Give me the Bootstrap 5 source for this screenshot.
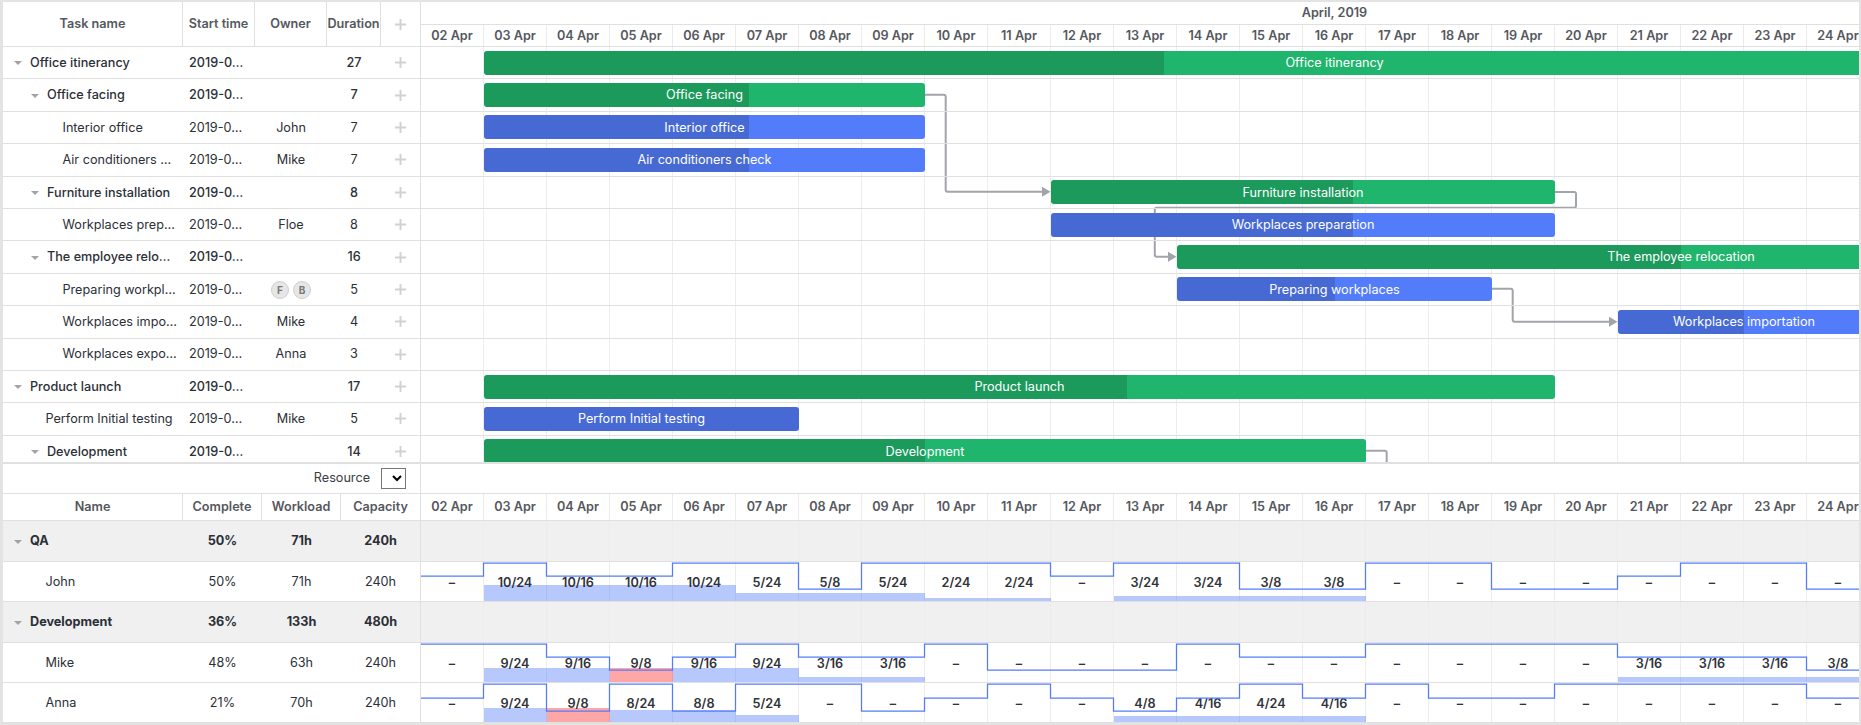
<!DOCTYPE html>
<html lang="en">
<head>
<meta charset="utf-8">
<title>Gantt resource load</title>
<link href="https://cdn.jsdelivr.net/npm/bootstrap@5.3.0/dist/css/bootstrap.min.css" rel="stylesheet">
<style>
html,body{height:100%;overflow:hidden}
body{background:#e3e3e3;padding:2px 2px 2px 3px;font-family:Inter,"Liberation Sans",sans-serif;font-size:12.65px;color:#2b2f36}
.gt-app{width:1856px;height:721px;background:#fff;overflow:hidden}
.gt-top{height:462px;border-bottom:2px solid #e0e0e0;overflow:hidden}
.gt-left{width:418px;flex:none;border-right:1px solid #e0e0e0}
.gt-right{width:1438px;flex:none;overflow:hidden}
.gt-hdr{height:45px;border-bottom:1px solid #e0e0e0;font-weight:600;color:#55585e}
.gt-hdr>div{height:100%;display:flex;align-items:center;justify-content:center;border-right:1px solid #e0e0e0}
.gt-hdr>div:last-child{border-right:0}
.gt-row{height:32.4px;border-bottom:1px solid #e0e0e0}
.gt-w1{width:180px;flex:none;white-space:nowrap;padding-top:1.5px}
.gt-w2{width:72px;flex:none;padding-top:1.5px}
.gt-w3{width:72px;flex:none;padding-top:1.5px}
.gt-w4{width:54px;flex:none;padding-top:1.5px}
.gt-w5{width:39px;flex:none}
.gt-start{padding-left:6px}
.gt-parent .gt-w1{font-weight:500}
.gt-parent .gt-w2{font-weight:500}
.gt-parent .gt-w4{font-weight:500}
.gt-caret{display:block;width:0;height:0;border-left:4px solid transparent;border-right:4px solid transparent;border-top:4px solid #a3a3a3;flex:none;margin-right:8px}
.gt-l0{padding-left:11px}
.gt-l1{padding-left:28px}
.gt-l2{padding-left:59.5px}
.gt-l1b{padding-left:42.5px}
.gt-plus{display:block;width:11px;height:11px}
.gt-plus path{stroke:#d0d1d3;stroke-width:1.9;fill:none}
.gt-ava{width:18px;height:18px;border-radius:50%;background:#e6e6e6;border:1px solid #cfcfcf;color:#777;font-size:10px;font-weight:700;display:flex;align-items:center;justify-content:center}
.gt-month{height:23px;border-bottom:1px solid #e0e0e0;width:1827px;font-weight:600;color:#55585e;padding-top:1.5px}
.gt-scale{height:22px;width:1449px;display:grid;grid-template-columns:repeat(23,63px);border-bottom:1px solid #e0e0e0;font-weight:600;color:#55585e}
.gt-scale>div{display:flex;align-items:center;justify-content:center;border-right:1px solid #ebebeb;white-space:nowrap;padding-top:1.5px}
.gt-body{position:relative;isolation:isolate;height:415px;overflow:hidden;width:1438px;background-image:repeating-linear-gradient(to right,transparent 0,transparent 62px,#ededed 62px,#ededed 63px)}
.gt-links{position:absolute;left:0;top:0;width:1438px;height:415px;z-index:-1;fill:none;stroke:#a1a4a9;stroke-width:2}
.gt-links polygon{fill:#a1a4a9;stroke:none}
.gt-track{display:grid;grid-template-columns:repeat(28,63px);width:1764px;align-items:center}
.gt-bar{position:relative;height:24px;border-radius:3px;overflow:hidden;color:#fff;display:flex;align-items:center;justify-content:center;white-space:nowrap;padding-top:1.5px}
.gt-task{background:#537cfa}
.gt-proj{background:#20b56d}
.gt-prog{position:absolute;left:0;top:0;bottom:0;background:rgba(0,0,0,.15)}
.gt-bar span{position:relative}
.gt-res{height:259px}
.gt-resbar{height:30px;border-bottom:1px solid #e0e0e0}
.gt-rblank{height:30px;border-bottom:1px solid #e0e0e0;background-image:none}
.gt-reslabel{padding-right:11px;color:#3a3d43}
.gt-select{width:25px;height:21px;margin-right:14px;padding:0;background:#fff;border:1px solid #767676;border-radius:0;color:#000}
.gt-rhdr{height:27px;border-bottom:1px solid #e0e0e0;font-weight:600;color:#55585e}
.gt-rhdr>div{height:100%;display:flex;align-items:center;justify-content:center;border-right:1px solid #e0e0e0;padding-top:1.5px}
.gt-rhdr>div:last-child{border-right:0}
.gt-rscale{height:27px}
.gt-n{width:180px;flex:none;padding-top:1.5px}
.gt-m1{width:79px;flex:none;padding-top:1.5px}
.gt-m2{width:79px;flex:none;padding-top:1.5px}
.gt-m3{width:79px;flex:none;padding-top:1.5px}
.gt-rrow{border-bottom:1px solid #e0e0e0;height:40px}
.gt-rtall{height:41px}
.gt-group{background:#f0f0f0;font-weight:700}
.gt-rline{position:relative;width:1449px;display:grid;grid-template-columns:repeat(23,63px);font-weight:600;color:#303338}
.gt-rline.gt-group{background-color:#f0f0f0;background-image:repeating-linear-gradient(to right,transparent 0,transparent 62px,#ececec 62px,#ececec 63px)}
.gt-c{position:relative;display:flex;align-items:center;justify-content:center;border-right:1px solid #ededed;padding-top:4px}
.gt-c span{position:relative}
.gt-fill{position:absolute;left:0;right:-1px;bottom:0;background:rgba(83,124,250,.42)}
.gt-over{background:rgba(255,0,0,.35)}
.gt-cap{position:absolute;left:0;top:0;width:1449px;height:100%;fill:none;stroke:#537cfa;stroke-width:1.25;z-index:2}
</style>
</head>
<body>
<div class="gt-app d-flex flex-column">
  <section class="gt-top d-flex flex-shrink-0">
    <div class="gt-left">
      <div class="gt-hdr d-flex">
        <div class="gt-w1">Task name</div><div class="gt-w2">Start time</div><div class="gt-w3">Owner</div><div class="gt-w4">Duration</div>
        <div class="gt-w5"><svg class="gt-plus" viewBox="0 0 11 11"><path d="M5.5 0V11M0 5.5H11"/></svg></div>
      </div>
      <div class="gt-row gt-parent d-flex align-items-center"><div class="gt-w1 gt-l0 d-flex align-items-center"><i class="gt-caret"></i>Office itinerancy</div><div class="gt-w2 gt-start">2019-0…</div><div class="gt-w3 text-center"></div><div class="gt-w4 text-center">27</div><div class="gt-w5 d-flex justify-content-center"><svg class="gt-plus" viewBox="0 0 11 11"><path d="M5.5 0V11M0 5.5H11"/></svg></div></div>
      <div class="gt-row gt-parent d-flex align-items-center"><div class="gt-w1 gt-l1 d-flex align-items-center"><i class="gt-caret"></i>Office facing</div><div class="gt-w2 gt-start">2019-0…</div><div class="gt-w3 text-center"></div><div class="gt-w4 text-center">7</div><div class="gt-w5 d-flex justify-content-center"><svg class="gt-plus" viewBox="0 0 11 11"><path d="M5.5 0V11M0 5.5H11"/></svg></div></div>
      <div class="gt-row d-flex align-items-center"><div class="gt-w1 gt-l2">Interior office</div><div class="gt-w2 gt-start">2019-0…</div><div class="gt-w3 text-center">John</div><div class="gt-w4 text-center">7</div><div class="gt-w5 d-flex justify-content-center"><svg class="gt-plus" viewBox="0 0 11 11"><path d="M5.5 0V11M0 5.5H11"/></svg></div></div>
      <div class="gt-row d-flex align-items-center"><div class="gt-w1 gt-l2">Air conditioners …</div><div class="gt-w2 gt-start">2019-0…</div><div class="gt-w3 text-center">Mike</div><div class="gt-w4 text-center">7</div><div class="gt-w5 d-flex justify-content-center"><svg class="gt-plus" viewBox="0 0 11 11"><path d="M5.5 0V11M0 5.5H11"/></svg></div></div>
      <div class="gt-row gt-parent d-flex align-items-center"><div class="gt-w1 gt-l1 d-flex align-items-center"><i class="gt-caret"></i>Furniture installation</div><div class="gt-w2 gt-start">2019-0…</div><div class="gt-w3 text-center"></div><div class="gt-w4 text-center">8</div><div class="gt-w5 d-flex justify-content-center"><svg class="gt-plus" viewBox="0 0 11 11"><path d="M5.5 0V11M0 5.5H11"/></svg></div></div>
      <div class="gt-row d-flex align-items-center"><div class="gt-w1 gt-l2">Workplaces prep…</div><div class="gt-w2 gt-start">2019-0…</div><div class="gt-w3 text-center">Floe</div><div class="gt-w4 text-center">8</div><div class="gt-w5 d-flex justify-content-center"><svg class="gt-plus" viewBox="0 0 11 11"><path d="M5.5 0V11M0 5.5H11"/></svg></div></div>
      <div class="gt-row gt-parent d-flex align-items-center"><div class="gt-w1 gt-l1 d-flex align-items-center"><i class="gt-caret"></i>The employee relo…</div><div class="gt-w2 gt-start">2019-0…</div><div class="gt-w3 text-center"></div><div class="gt-w4 text-center">16</div><div class="gt-w5 d-flex justify-content-center"><svg class="gt-plus" viewBox="0 0 11 11"><path d="M5.5 0V11M0 5.5H11"/></svg></div></div>
      <div class="gt-row d-flex align-items-center"><div class="gt-w1 gt-l2">Preparing workpl…</div><div class="gt-w2 gt-start">2019-0…</div><div class="gt-w3 d-flex justify-content-center gap-1"><div class="gt-ava">F</div><div class="gt-ava">B</div></div><div class="gt-w4 text-center">5</div><div class="gt-w5 d-flex justify-content-center"><svg class="gt-plus" viewBox="0 0 11 11"><path d="M5.5 0V11M0 5.5H11"/></svg></div></div>
      <div class="gt-row d-flex align-items-center"><div class="gt-w1 gt-l2">Workplaces impo…</div><div class="gt-w2 gt-start">2019-0…</div><div class="gt-w3 text-center">Mike</div><div class="gt-w4 text-center">4</div><div class="gt-w5 d-flex justify-content-center"><svg class="gt-plus" viewBox="0 0 11 11"><path d="M5.5 0V11M0 5.5H11"/></svg></div></div>
      <div class="gt-row d-flex align-items-center"><div class="gt-w1 gt-l2">Workplaces expo…</div><div class="gt-w2 gt-start">2019-0…</div><div class="gt-w3 text-center">Anna</div><div class="gt-w4 text-center">3</div><div class="gt-w5 d-flex justify-content-center"><svg class="gt-plus" viewBox="0 0 11 11"><path d="M5.5 0V11M0 5.5H11"/></svg></div></div>
      <div class="gt-row gt-parent d-flex align-items-center"><div class="gt-w1 gt-l0 d-flex align-items-center"><i class="gt-caret"></i>Product launch</div><div class="gt-w2 gt-start">2019-0…</div><div class="gt-w3 text-center"></div><div class="gt-w4 text-center">17</div><div class="gt-w5 d-flex justify-content-center"><svg class="gt-plus" viewBox="0 0 11 11"><path d="M5.5 0V11M0 5.5H11"/></svg></div></div>
      <div class="gt-row d-flex align-items-center"><div class="gt-w1 gt-l1b">Perform Initial testing</div><div class="gt-w2 gt-start">2019-0…</div><div class="gt-w3 text-center">Mike</div><div class="gt-w4 text-center">5</div><div class="gt-w5 d-flex justify-content-center"><svg class="gt-plus" viewBox="0 0 11 11"><path d="M5.5 0V11M0 5.5H11"/></svg></div></div>
      <div class="gt-row gt-parent d-flex align-items-center"><div class="gt-w1 gt-l1 d-flex align-items-center"><i class="gt-caret"></i>Development</div><div class="gt-w2 gt-start">2019-0…</div><div class="gt-w3 text-center"></div><div class="gt-w4 text-center">14</div><div class="gt-w5 d-flex justify-content-center"><svg class="gt-plus" viewBox="0 0 11 11"><path d="M5.5 0V11M0 5.5H11"/></svg></div></div>
    </div>
    <div class="gt-right">
      <div class="gt-month d-flex align-items-center justify-content-center">April, 2019</div>
      <div class="gt-scale"><div>02 Apr</div><div>03 Apr</div><div>04 Apr</div><div>05 Apr</div><div>06 Apr</div><div>07 Apr</div><div>08 Apr</div><div>09 Apr</div><div>10 Apr</div><div>11 Apr</div><div>12 Apr</div><div>13 Apr</div><div>14 Apr</div><div>15 Apr</div><div>16 Apr</div><div>17 Apr</div><div>18 Apr</div><div>19 Apr</div><div>20 Apr</div><div>21 Apr</div><div>22 Apr</div><div>23 Apr</div><div>24 Apr</div></div>
      <div class="gt-body">
        <svg class="gt-links" viewBox="0 0 1438 415">
          <path d="M504 47.7H522.7Q524.7 47.7 524.7 49.7V142.7Q524.7 144.7 526.7 144.7H622"/><polygon points="621,139.7 629.5,144.7 621,149.7"/>
          <path d="M1134 145H1153Q1155 145 1155 147V158.7Q1155 160.7 1153 160.7H735.8Q733.8 160.7 733.8 162.7V207.7Q733.8 209.7 735.8 209.7H748"/><polygon points="747,204.7 755.5,209.7 747,214.7"/>
          <path d="M1070 241.7H1089.7Q1091.7 241.7 1091.7 243.7V272.7Q1091.7 274.7 1093.7 274.7H1189"/><polygon points="1188,269.7 1196.5,274.7 1188,279.7"/>
          <path d="M945 403.7H963.7Q965.7 403.7 965.7 405.7V416"/>
        </svg>
        <div class="gt-row gt-track"><div class="gt-bar gt-proj" style="grid-column:2 / span 27"><div class="gt-prog" style="width:40%"></div><span>Office itinerancy</span></div></div>
        <div class="gt-row gt-track"><div class="gt-bar gt-proj" style="grid-column:2 / span 7"><div class="gt-prog" style="width:60%"></div><span>Office facing</span></div></div>
        <div class="gt-row gt-track"><div class="gt-bar gt-task" style="grid-column:2 / span 7"><div class="gt-prog" style="width:60%"></div><span>Interior office</span></div></div>
        <div class="gt-row gt-track"><div class="gt-bar gt-task" style="grid-column:2 / span 7"><div class="gt-prog" style="width:60%"></div><span>Air conditioners check</span></div></div>
        <div class="gt-row gt-track"><div class="gt-bar gt-proj" style="grid-column:11 / span 8"><div class="gt-prog" style="width:60%"></div><span>Furniture installation</span></div></div>
        <div class="gt-row gt-track"><div class="gt-bar gt-task" style="grid-column:11 / span 8"><div class="gt-prog" style="width:60%"></div><span>Workplaces preparation</span></div></div>
        <div class="gt-row gt-track"><div class="gt-bar gt-proj" style="grid-column:13 / span 16"><div class="gt-prog" style="width:50%"></div><span>The employee relocation</span></div></div>
        <div class="gt-row gt-track"><div class="gt-bar gt-task" style="grid-column:13 / span 5"><div class="gt-prog" style="width:50%"></div><span>Preparing workplaces</span></div></div>
        <div class="gt-row gt-track"><div class="gt-bar gt-task" style="grid-column:20 / span 4"><div class="gt-prog" style="width:50%"></div><span>Workplaces importation</span></div></div>
        <div class="gt-row gt-track"></div>
        <div class="gt-row gt-track"><div class="gt-bar gt-proj" style="grid-column:2 / span 17"><div class="gt-prog" style="width:60%"></div><span>Product launch</span></div></div>
        <div class="gt-row gt-track"><div class="gt-bar gt-task" style="grid-column:2 / span 5"><div class="gt-prog" style="width:100%"></div><span>Perform Initial testing</span></div></div>
        <div class="gt-row gt-track"><div class="gt-bar gt-proj" style="grid-column:2 / span 14"><div class="gt-prog" style="width:50%"></div><span>Development</span></div></div>
      </div>
    </div>
  </section>
  <section class="gt-res d-flex flex-shrink-0">
    <div class="gt-left">
      <div class="gt-resbar d-flex align-items-center justify-content-end">
        <label class="gt-reslabel" for="gt-resource">Resource</label>
        <select id="gt-resource" class="gt-select"><option></option></select>
      </div>
      <div class="gt-rhdr d-flex"><div class="gt-n">Name</div><div class="gt-m1">Complete</div><div class="gt-m2">Workload</div><div class="gt-m3">Capacity</div></div>
      <div class="gt-rrow gt-rtall gt-group d-flex align-items-center"><div class="gt-n gt-l0 d-flex align-items-center"><i class="gt-caret"></i>QA</div><div class="gt-m1 text-center">50%</div><div class="gt-m2 text-center">71h</div><div class="gt-m3 text-center">240h</div></div>
      <div class="gt-rrow d-flex align-items-center"><div class="gt-n gt-l1b">John</div><div class="gt-m1 text-center">50%</div><div class="gt-m2 text-center">71h</div><div class="gt-m3 text-center">240h</div></div>
      <div class="gt-rrow gt-rtall gt-group d-flex align-items-center"><div class="gt-n gt-l0 d-flex align-items-center"><i class="gt-caret"></i>Development</div><div class="gt-m1 text-center">36%</div><div class="gt-m2 text-center">133h</div><div class="gt-m3 text-center">480h</div></div>
      <div class="gt-rrow d-flex align-items-center"><div class="gt-n gt-l1b">Mike</div><div class="gt-m1 text-center">48%</div><div class="gt-m2 text-center">63h</div><div class="gt-m3 text-center">240h</div></div>
      <div class="gt-rrow d-flex align-items-center"><div class="gt-n gt-l1b">Anna</div><div class="gt-m1 text-center">21%</div><div class="gt-m2 text-center">70h</div><div class="gt-m3 text-center">240h</div></div>
    </div>
    <div class="gt-right">
      <div class="gt-rblank"></div>
      <div class="gt-scale gt-rscale"><div>02 Apr</div><div>03 Apr</div><div>04 Apr</div><div>05 Apr</div><div>06 Apr</div><div>07 Apr</div><div>08 Apr</div><div>09 Apr</div><div>10 Apr</div><div>11 Apr</div><div>12 Apr</div><div>13 Apr</div><div>14 Apr</div><div>15 Apr</div><div>16 Apr</div><div>17 Apr</div><div>18 Apr</div><div>19 Apr</div><div>20 Apr</div><div>21 Apr</div><div>22 Apr</div><div>23 Apr</div><div>24 Apr</div></div>
      <div class="gt-rrow gt-rtall gt-rline gt-group"></div>
      <div class="gt-rrow gt-rline">
        <div class="gt-c"><span>–</span></div>
        <div class="gt-c"><div class="gt-fill" style="height:16px"></div><span>10/24</span></div>
        <div class="gt-c"><div class="gt-fill" style="height:16px"></div><span>10/16</span></div>
        <div class="gt-c"><div class="gt-fill" style="height:16px"></div><span>10/16</span></div>
        <div class="gt-c"><div class="gt-fill" style="height:16px"></div><span>10/24</span></div>
        <div class="gt-c"><div class="gt-fill" style="height:8px"></div><span>5/24</span></div>
        <div class="gt-c"><div class="gt-fill" style="height:8px"></div><span>5/8</span></div>
        <div class="gt-c"><div class="gt-fill" style="height:8px"></div><span>5/24</span></div>
        <div class="gt-c"><div class="gt-fill" style="height:3px"></div><span>2/24</span></div>
        <div class="gt-c"><div class="gt-fill" style="height:3px"></div><span>2/24</span></div>
        <div class="gt-c"><span>–</span></div>
        <div class="gt-c"><div class="gt-fill" style="height:5px"></div><span>3/24</span></div>
        <div class="gt-c"><div class="gt-fill" style="height:5px"></div><span>3/24</span></div>
        <div class="gt-c"><div class="gt-fill" style="height:5px"></div><span>3/8</span></div>
        <div class="gt-c"><div class="gt-fill" style="height:5px"></div><span>3/8</span></div>
        <div class="gt-c"><span>–</span></div><div class="gt-c"><span>–</span></div><div class="gt-c"><span>–</span></div><div class="gt-c"><span>–</span></div><div class="gt-c"><span>–</span></div><div class="gt-c"><span>–</span></div><div class="gt-c"><span>–</span></div><div class="gt-c"><span>–</span></div>
        <svg class="gt-cap" viewBox="0 0 1449 39" preserveAspectRatio="none"><path d="M0 14H62.5V1H125.5V14H251.5V1H377.5V27H440.5V1H629.5V14H692.5V1H818.5V27H944.5V1H1070.5V27H1196.5V14H1259.5V1H1385.5V27H1449"/></svg>
      </div>
      <div class="gt-rrow gt-rtall gt-rline gt-group"></div>
      <div class="gt-rrow gt-rline">
        <div class="gt-c"><span>–</span></div>
        <div class="gt-c"><div class="gt-fill" style="height:14px"></div><span>9/24</span></div>
        <div class="gt-c"><div class="gt-fill" style="height:14px"></div><span>9/16</span></div>
        <div class="gt-c"><div class="gt-fill gt-over" style="height:14px"></div><span>9/8</span></div>
        <div class="gt-c"><div class="gt-fill" style="height:14px"></div><span>9/16</span></div>
        <div class="gt-c"><div class="gt-fill" style="height:14px"></div><span>9/24</span></div>
        <div class="gt-c"><div class="gt-fill" style="height:5px"></div><span>3/16</span></div>
        <div class="gt-c"><div class="gt-fill" style="height:5px"></div><span>3/16</span></div>
        <div class="gt-c"><span>–</span></div><div class="gt-c"><span>–</span></div><div class="gt-c"><span>–</span></div><div class="gt-c"><span>–</span></div><div class="gt-c"><span>–</span></div><div class="gt-c"><span>–</span></div><div class="gt-c"><span>–</span></div><div class="gt-c"><span>–</span></div><div class="gt-c"><span>–</span></div><div class="gt-c"><span>–</span></div><div class="gt-c"><span>–</span></div>
        <div class="gt-c"><div class="gt-fill" style="height:5px"></div><span>3/16</span></div>
        <div class="gt-c"><div class="gt-fill" style="height:5px"></div><span>3/16</span></div>
        <div class="gt-c"><div class="gt-fill" style="height:5px"></div><span>3/16</span></div>
        <div class="gt-c"><div class="gt-fill" style="height:5px"></div><span>3/8</span></div>
        <svg class="gt-cap" viewBox="0 0 1449 39" preserveAspectRatio="none"><path d="M0 1H125.5V14H188.5V27H251.5V14H314.5V1H377.5V14H503.5V1H566.5V27H755.5V1H818.5V14H944.5V1H1196.5V14H1385.5V27H1449"/></svg>
      </div>
      <div class="gt-rrow gt-rline">
        <div class="gt-c"><span>–</span></div>
        <div class="gt-c"><div class="gt-fill" style="height:14px"></div><span>9/24</span></div>
        <div class="gt-c"><div class="gt-fill gt-over" style="height:14px"></div><span>9/8</span></div>
        <div class="gt-c"><div class="gt-fill" style="height:12px"></div><span>8/24</span></div>
        <div class="gt-c"><div class="gt-fill" style="height:12px"></div><span>8/8</span></div>
        <div class="gt-c"><div class="gt-fill" style="height:7px"></div><span>5/24</span></div>
        <div class="gt-c"><span>–</span></div><div class="gt-c"><span>–</span></div><div class="gt-c"><span>–</span></div><div class="gt-c"><span>–</span></div><div class="gt-c"><span>–</span></div>
        <div class="gt-c"><div class="gt-fill" style="height:6px"></div><span>4/8</span></div>
        <div class="gt-c"><div class="gt-fill" style="height:6px"></div><span>4/16</span></div>
        <div class="gt-c"><div class="gt-fill" style="height:6px"></div><span>4/24</span></div>
        <div class="gt-c"><div class="gt-fill" style="height:6px"></div><span>4/16</span></div>
        <div class="gt-c"><span>–</span></div><div class="gt-c"><span>–</span></div><div class="gt-c"><span>–</span></div><div class="gt-c"><span>–</span></div><div class="gt-c"><span>–</span></div><div class="gt-c"><span>–</span></div><div class="gt-c"><span>–</span></div><div class="gt-c"><span>–</span></div>
        <svg class="gt-cap" viewBox="0 0 1449 39" preserveAspectRatio="none"><path d="M0 15H62.5V1H125.5V28H188.5V1H251.5V28H314.5V1H440.5V28H503.5V15H566.5V1H629.5V15H692.5V28H755.5V15H818.5V1H881.5V15H944.5V1H1007.5V15H1133.5V1H1385.5V15H1449"/></svg>
      </div>
    </div>
  </section>
</div>
<script src="https://cdn.jsdelivr.net/npm/bootstrap@5.3.0/dist/js/bootstrap.bundle.min.js"></script>
</body>
</html>
